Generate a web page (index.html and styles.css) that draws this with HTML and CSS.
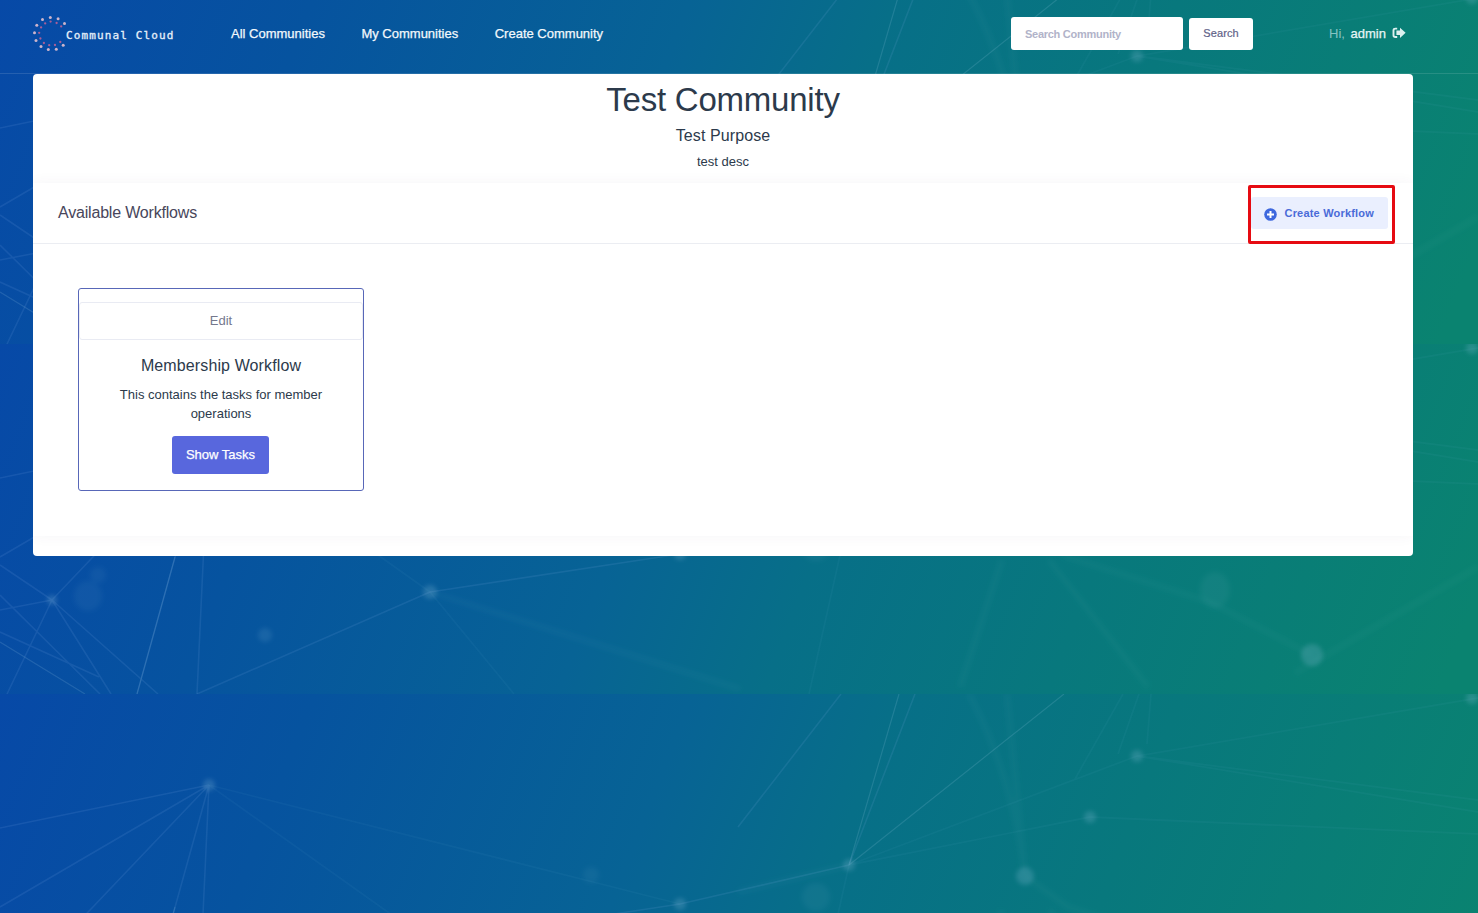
FILE: index.html
```
<!DOCTYPE html>
<html lang="en">
<head>
<meta charset="utf-8">
<title>Communal Cloud</title>
<link rel="stylesheet" href="styles.css">
</head>
<body>
<svg class="backdrop" width="1478" height="913" viewBox="0 0 1478 913" aria-hidden="true">
  <defs>
    <linearGradient id="sea" gradientUnits="userSpaceOnUse" x1="0" y1="0" x2="1370" y2="530">
      <stop offset="0" stop-color="#0749a7"/>
      <stop offset=".2" stop-color="#06539f"/>
      <stop offset=".44" stop-color="#076395"/>
      <stop offset=".57" stop-color="#076f88"/>
      <stop offset=".75" stop-color="#08787d"/>
      <stop offset="1" stop-color="#0a8370"/>
    </linearGradient>
    <filter id="soft" x="-50%" y="-50%" width="200%" height="200%"><feGaussianBlur stdDeviation="2"/></filter>
    <filter id="haze" x="-5%" y="-5%" width="110%" height="110%"><feGaussianBlur stdDeviation="2.6"/></filter>
    <symbol id="tile" viewBox="0 0 1478 350" width="1478" height="350">
      <rect width="1478" height="350" fill="url(#sea)"/>
      <g class="lines">
        <path d="M209 91L0 134M209 91L0 213M209 91L52 256M209 91L137 350M209 91L197 350M52 256L0 221M52 256L0 266M52 256L7 350M52 256L111 350M52 256L158 350M0 251L100 350M0 288L99 333M0 213L60 178"/>
        <path class="bright" d="M175 213L137 350M0 298L85 350M849 171L899 0M1064 0L849 171"/>
        <path d="M849 171L915 0M841 0L738 133M430 248L680 210L849 171M430 248L197 350"/>
      </g>
      <g class="lines faint">
        <path d="M209 91L430 248L514 350M209 91L680 210M849 171L809 350M849 171L1137 62L1478 4M849 171L1090 123L1478 140M1137 62L1478 106M1137 62L1478 118M1139 0L1118 60M1151 0L1147 50M1123 0L1075 85"/>
      </g>
      <g class="lines wide" filter="url(#haze)">
        <path d="M969 0Q1012 80 1025 182M1007 0L1025 182L1068 213L1210 258L1312 311M1049 216L1148 343M1002 216L960 343M1478 223L1295 329M430 248L740 345M738 198L849 171"/>
      </g>
      <g class="nodes" filter="url(#soft)">
        <circle cx="209" cy="91" r="6"/><circle cx="52" cy="256" r="5"/><circle cx="430" cy="248" r="7"/>
        <circle cx="849" cy="171" r="6"/><circle cx="1137" cy="62" r="6"/><circle cx="1090" cy="123" r="6"/>
        <circle cx="1025" cy="182" r="9"/><circle cx="680" cy="210" r="6"/><circle cx="1312" cy="311" r="11"/>
        <circle cx="1472" cy="4" r="6"/><circle cx="265" cy="291" r="7" opacity=".6"/>
      </g>
      <g class="nodes dim" filter="url(#haze)">
        <ellipse cx="88" cy="252" rx="14" ry="15"/><circle cx="98" cy="231" r="8"/>
        <circle cx="816" cy="203" r="14"/><ellipse cx="1215" cy="246" rx="15" ry="18"/><circle cx="591" cy="181" r="8"/>
      </g>
    </symbol>
  </defs>
  <use href="#tile" y="-6"/><use href="#tile" y="344"/><use href="#tile" y="694"/>
</svg>

<header class="header">
  <a class="brand">
    <svg class="brand-mark" width="35" height="37" viewBox="0 0 35 37">
      <g fill="#cdb4cb">
        <circle cx="17.3" cy="2.4" r="1.5"/><circle cx="25.1" cy="3.8" r="1.5"/><circle cx="31.5" cy="8.6" r="1.5"/>
        <circle cx="9.5" cy="4.6" r="1.5"/><circle cx="3.8" cy="10.2" r="1.5"/><circle cx="1.5" cy="17.8" r="1.5"/>
        <circle cx="3" cy="25.5" r="1.5"/><circle cx="8" cy="31.6" r="1.5"/><circle cx="15.3" cy="34.5" r="1.5"/>
        <circle cx="23.3" cy="34.2" r="1.5"/><circle cx="30.2" cy="30.3" r="1.5"/>
      </g>
      <g fill="#a85f98">
        <circle cx="17.6" cy="6.6" r="1.15"/><circle cx="23.6" cy="8" r="1.15"/><circle cx="28.2" cy="11.4" r="1.15"/>
        <circle cx="12.2" cy="8.4" r="1.15"/><circle cx="8.1" cy="12.4" r="1.15"/><circle cx="6.2" cy="17.8" r="1.15"/>
        <circle cx="7.4" cy="23.5" r="1.15"/><circle cx="10.9" cy="28" r="1.15"/><circle cx="16.2" cy="30.2" r="1.15"/>
        <circle cx="22" cy="30" r="1.15"/><circle cx="27.3" cy="27" r="1.15"/>
      </g>
    </svg>
    <span class="brand-name">Communal Cloud</span>
  </a>
  <nav class="nav"><a>All Communities</a><a>My Communities</a><a>Create Community</a></nav>
  <form class="search">
    <input class="search-input" type="text" placeholder="Search Community">
    <button class="search-button" type="button">Search</button>
  </form>
  <div class="user">
    <span class="hi">Hi,</span><span class="name">admin</span>
    <svg width="14" height="12" viewBox="0 0 14 12"><path d="M5.2 1.6H3.4Q1.5 1.6 1.5 3.4V8.2Q1.5 10 3.4 10H5.2" fill="none" stroke="#dcf0ef" stroke-width="1.9"/><path d="M8 .7L13.6 5.8L8 10.9V8H4.4V3.6H8Z" fill="#dcf0ef"/></svg>
  </div>
</header>

<main class="page">
  <section class="intro">
    <h1>Test Community</h1>
    <h2>Test Purpose</h2>
    <p>test desc</p>
  </section>
  <section class="workflows">
    <div class="workflows-head">
      <h3>Available Workflows</h3>
      <button class="create" type="button">
        <svg width="13" height="13" viewBox="0 0 13 13"><circle cx="6.5" cy="6.5" r="6.3" fill="#3e68de"/><path d="M6.5 3V10M3 6.5H10" stroke="#fff" stroke-width="2"/></svg>
        <span>Create Workflow</span>
      </button>
      <div class="highlight"></div>
    </div>
    <div class="workflows-body">
      <article class="card">
        <a class="edit">Edit</a>
        <h4>Membership Workflow</h4>
        <p>This contains the tasks for member operations</p>
        <button class="show" type="button">Show Tasks</button>
      </article>
    </div>
  </section>
</main>
</body>
</html>
```

FILE: styles.css
```
* { box-sizing: border-box; }
body {
  margin: 0;
  height: 913px;
  overflow: hidden;
  background: #07639a;
  font-family: "Liberation Sans", Arial, sans-serif;
  font-size: 13px;
  color: #2c3a4b;
}
h1, h2, h3, h4, p { margin: 0; font-weight: 400; }
button, input { font-family: inherit; border: 0; padding: 0; }

.backdrop { position: absolute; top: 0; left: 0; z-index: -1; }
.lines { fill: none; stroke: #8fb2ee; stroke-opacity: .12; stroke-width: 1.6; }
.lines .bright { stroke: #a8d4ee; stroke-opacity: .16; stroke-width: 1.2; }
.lines.faint { stroke: #7fc0d8; stroke-opacity: .06; stroke-width: 1.8; }
.lines.wide { stroke: #7fc8cc; stroke-opacity: .05; stroke-width: 6; }
.nodes { fill: #8cc0d8; fill-opacity: .23; }
.nodes.dim { fill-opacity: .07; }

.header {
  display: flex;
  align-items: flex-start;
  height: 74px;
  padding-left: 33px;
  border-bottom: 1px solid rgba(255, 255, 255, .12);
}
.brand { display: flex; width: 198px; padding-top: 15px; }
.brand-mark { flex: none; }
.brand-name {
  margin: 13px 0 0 -2px;
  font: 400 11px/16px "DejaVu Sans Mono", monospace;
  letter-spacing: 1.12px;
  color: #e6f0fa;
  -webkit-text-stroke: .3px #e6f0fa;
  white-space: nowrap;
}
.nav {
  display: flex;
  gap: 36.5px;
  width: 780px;
  padding-top: 24px;
  line-height: 20px;
  color: #f2f8fc;
  -webkit-text-stroke: .25px #f2f8fc;
}
.search { display: flex; gap: 6px; padding-top: 17px; }
.search-input {
  width: 172px;
  height: 33px;
  padding: 1px 14px 0;
  border-radius: 3px;
  background: #fff;
  font-size: 11px;
  font-weight: 700;
  letter-spacing: -.27px;
}
.search-input::placeholder { color: #b1b3c9; opacity: 1; }
.search-button {
  width: 64px;
  height: 32px;
  padding-bottom: 2px;
  margin-top: 1px;
  border-radius: 3px;
  background: #fff;
  font-size: 11px;
  letter-spacing: .1px;
  color: #5f6288;
  -webkit-text-stroke: .2px #5f6288;
}
.user { display: flex; margin-left: 76px; padding-top: 24px; line-height: 20px; }
.hi { color: #86c3c3; width: 21.5px; }
.name { color: #e6f5f5; -webkit-text-stroke: .25px #e6f5f5; }
.user svg { margin: 3px 0 0 6px; }

.page {
  width: 1380px;
  height: 482px;
  margin-left: 33px;
  border-radius: 4px;
  background: #fff;
  overflow: hidden;
}
.intro { height: 109px; padding-top: 5px; text-align: center; }
.intro h1 { font-size: 33px; line-height: 41px; letter-spacing: -.23px; }
.intro h2 { padding-top: 6px; font-size: 16px; line-height: 20px; letter-spacing: .1px; }
.intro p { padding-top: 6px; line-height: 19px; }
.workflows { height: 353px; background: #fff; box-shadow: 0 0 13px rgba(82, 63, 105, .05); }
.workflows-head {
  position: relative;
  display: flex;
  justify-content: space-between;
  height: 61px;
  padding: 14px 25px 0;
  border-bottom: 1px solid #ebedf2;
}
.workflows-head h3 { padding-top: 1px; font-size: 16px; line-height: 30px; letter-spacing: -.19px; color: #48465b; }
.create {
  display: flex;
  align-items: center;
  gap: 7.5px;
  width: 137px;
  height: 32px;
  padding-left: 13px;
  border-radius: 3px;
  background: #eaeffe;
  font-size: 11px;
  font-weight: 700;
  letter-spacing: .19px;
  color: #4a6bd8;
  white-space: nowrap;
}
.create svg { margin-top: 2px; }
.highlight {
  position: absolute;
  top: 2px;
  right: 18px;
  width: 147px;
  height: 59px;
  border: 3px solid #e60b12;
  border-radius: 2px;
}
.workflows-body { padding: 44px 45px; }
.card {
  display: flex;
  flex-direction: column;
  align-items: center;
  width: 286px;
  height: 203px;
  padding-top: 13px;
  border: 1px solid #5867b8;
  border-radius: 3px;
  text-align: center;
}
.edit {
  align-self: stretch;
  height: 38px;
  border: 1px solid #e9ebf3;
  border-radius: 3px;
  line-height: 36px;
  color: #74788d;
}
.card h4 { padding-top: 15px; font-size: 16px; line-height: 22px; letter-spacing: .12px; }
.card p { width: 230px; padding-top: 8px; line-height: 19px; }
.show {
  width: 97px;
  height: 38px;
  margin: 13px 1px 0 0;
  padding-bottom: 2px;
  border-radius: 3px;
  background: #5867dd;
  font-size: 13px;
  color: #fff;
  -webkit-text-stroke: .25px #fff;
}
```
